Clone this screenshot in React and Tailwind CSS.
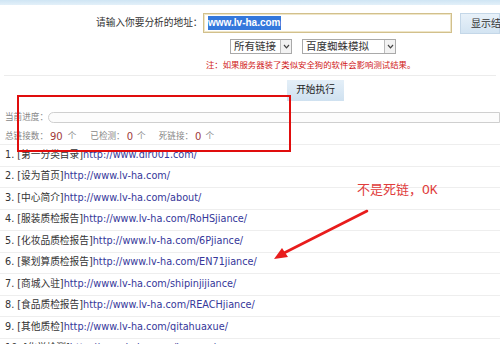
import React from "react";

const rows = [
  ["1.", "第一分类目录", "http://www.dir001.com/"],
  ["2.", "设为首页", "http://www.lv-ha.com/"],
  ["3.", "中心简介", "http://www.lv-ha.com/about/"],
  ["4.", "服装质检报告", "http://www.lv-ha.com/RoHSjiance/"],
  ["5.", "化妆品质检报告", "http://www.lv-ha.com/6Pjiance/"],
  ["6.", "聚划算质检报告", "http://www.lv-ha.com/EN71jiance/"],
  ["7.", "商城入驻", "http://www.lv-ha.com/shipinjijiance/"],
  ["8.", "食品质检报告", "http://www.lv-ha.com/REACHjiance/"],
  ["9.", "其他质检", "http://www.lv-ha.com/qitahuaxue/"],
  ["10.", "化学检测", "http://www.lv-ha.com/huaxue/"],
];

export default function App() {
  return (
    <div className="relative w-[500px] h-[344px] overflow-hidden bg-white font-['DejaVu_Sans','Noto_Sans_CJK_SC',sans-serif] text-[#333]">
      {/* top band */}
      <div className="h-[5px] bg-gradient-to-b from-[#cfe5f4] to-[#e3f0f9]" />

      {/* address row */}
      <div className="mt-[8px] flex items-center h-[20px]">
        <span className="ml-[96px] w-[110px] text-[9.7px] text-[#333] whitespace-nowrap">请输入你要分析的地址：</span>
        <div className="ml-[0px] w-[258px] h-[20px] border border-[#d2c08c] bg-white shadow-[inset_0_0_0_1px_#efe6c8] flex items-center pl-[4px]">
          <span className="bg-[#3478dc] text-white font-bold text-[10px] leading-[14px] font-['Liberation_Sans',sans-serif] px-[0.5px]">www.lv-ha.com</span>
        </div>
        <div className="ml-[8px] w-[40px] h-[21px] border border-[#c4d7e8] bg-gradient-to-b from-[#e8f1f9] to-[#d3e4f2] flex items-center pl-[10px] text-[10px] whitespace-nowrap">显示结果</div>
      </div>

      {/* selects */}
      <div className="mt-[6px] flex items-center h-[15px]">
        <div className="ml-[230px] w-[62px] h-[15px] border border-[#a9a9a9] bg-white flex items-center">
          <span className="pl-[3px] text-[10.5px] leading-none flex-1 whitespace-nowrap">所有链接</span>
          <span className="w-[11px] h-[13px] border-l border-[#bbb] bg-[#f2f2f2] flex items-center justify-center">
            <svg width="7" height="5" viewBox="0 0 7 5"><path d="M1 1 L3.5 3.8 L6 1" fill="none" stroke="#444" strokeWidth="1.2" /></svg>
          </span>
        </div>
        <div className="ml-[10px] w-[94px] h-[15px] border border-[#a9a9a9] bg-white flex items-center">
          <span className="pl-[3px] text-[10.5px] leading-none flex-1 whitespace-nowrap">百度蜘蛛模拟</span>
          <span className="w-[11px] h-[13px] border-l border-[#bbb] bg-[#f2f2f2] flex items-center justify-center">
            <svg width="7" height="5" viewBox="0 0 7 5"><path d="M1 1 L3.5 3.8 L6 1" fill="none" stroke="#444" strokeWidth="1.2" /></svg>
          </span>
        </div>
      </div>

      {/* note */}
      <div className="mt-[5px] h-[12px] pl-[206px] text-[8.4px] leading-[12px] text-[#d01818] whitespace-nowrap">
        注：如果服务器装了类似安全狗的软件会影响测试结果。
      </div>

      {/* divider */}
      <div className="mx-[4px] h-[5px] border-b border-[#ececec]" />

      {/* start button */}
      <div className="mt-[4px] ml-[287px] w-[57px] h-[21px] bg-gradient-to-b from-[#e4eff8] to-[#cfe1f0] flex items-center justify-center text-[9.7px] text-[#222]">
        开始执行
      </div>

      {/* progress */}
      <div className="mt-[11px] flex items-center h-[11px]">
        <span className="ml-[5px] w-[45px] text-[8.6px] text-[#888] whitespace-nowrap">当前进度：</span>
        <div className="w-[470px] h-[11px] rounded-l-full border border-[#cfcfcf] bg-[#fcfcfc]" />
      </div>

      {/* stats */}
      <div className="mt-[6px] h-[15px] flex items-center text-[8.6px] text-[#888] whitespace-nowrap">
        <span className="ml-[5px]">总链接数：</span>
        <span className="ml-[2px] text-[10px] text-[#a03a3a]">90</span>
        <span className="ml-[5px]">个</span>
        <span className="ml-[14px]">已检测：</span>
        <span className="ml-[2px] text-[10px] text-[#a03a3a]">0</span>
        <span className="ml-[4px]">个</span>
        <span className="ml-[13px]">死链接：</span>
        <span className="ml-[2px] text-[10px] text-[#a03a3a]">0</span>
        <span className="ml-[4px]">个</span>
      </div>

      {/* list */}
      <div className="mt-[0px]">
        {rows.map(([n, name, url]) => (
          <div key={n} className="h-[21.5px] border-t border-[#eeeeee] flex items-center pl-[5px] text-[9.7px] whitespace-nowrap">
            <span className="text-[#333]">{n} [{name}]</span>
            <span className="text-[#35379a]">{url}</span>
          </div>
        ))}
      </div>

      {/* annotation rectangle */}
      <div className="absolute left-[17px] top-[95px] w-[274px] h-[57px] border-2 border-[#e00d0d]" />

      {/* annotation text */}
      <div className="absolute left-[357px] top-[181px] text-[13px] leading-[16px] text-[#e03c3c] font-['Noto_Sans_CJK_SC',sans-serif] whitespace-nowrap">
        不是死链，<span className="font-['Liberation_Mono',monospace]">OK</span>
      </div>

      {/* arrow */}
      <svg className="absolute left-0 top-0" width="500" height="344" viewBox="0 0 500 344">
        <line x1="367" y1="211" x2="284" y2="253" stroke="#e81c1c" strokeWidth="2.6" strokeLinecap="round" />
        <polygon points="274,259 282,248 288,257" fill="#e81c1c" />
      </svg>
    </div>
  );
}
